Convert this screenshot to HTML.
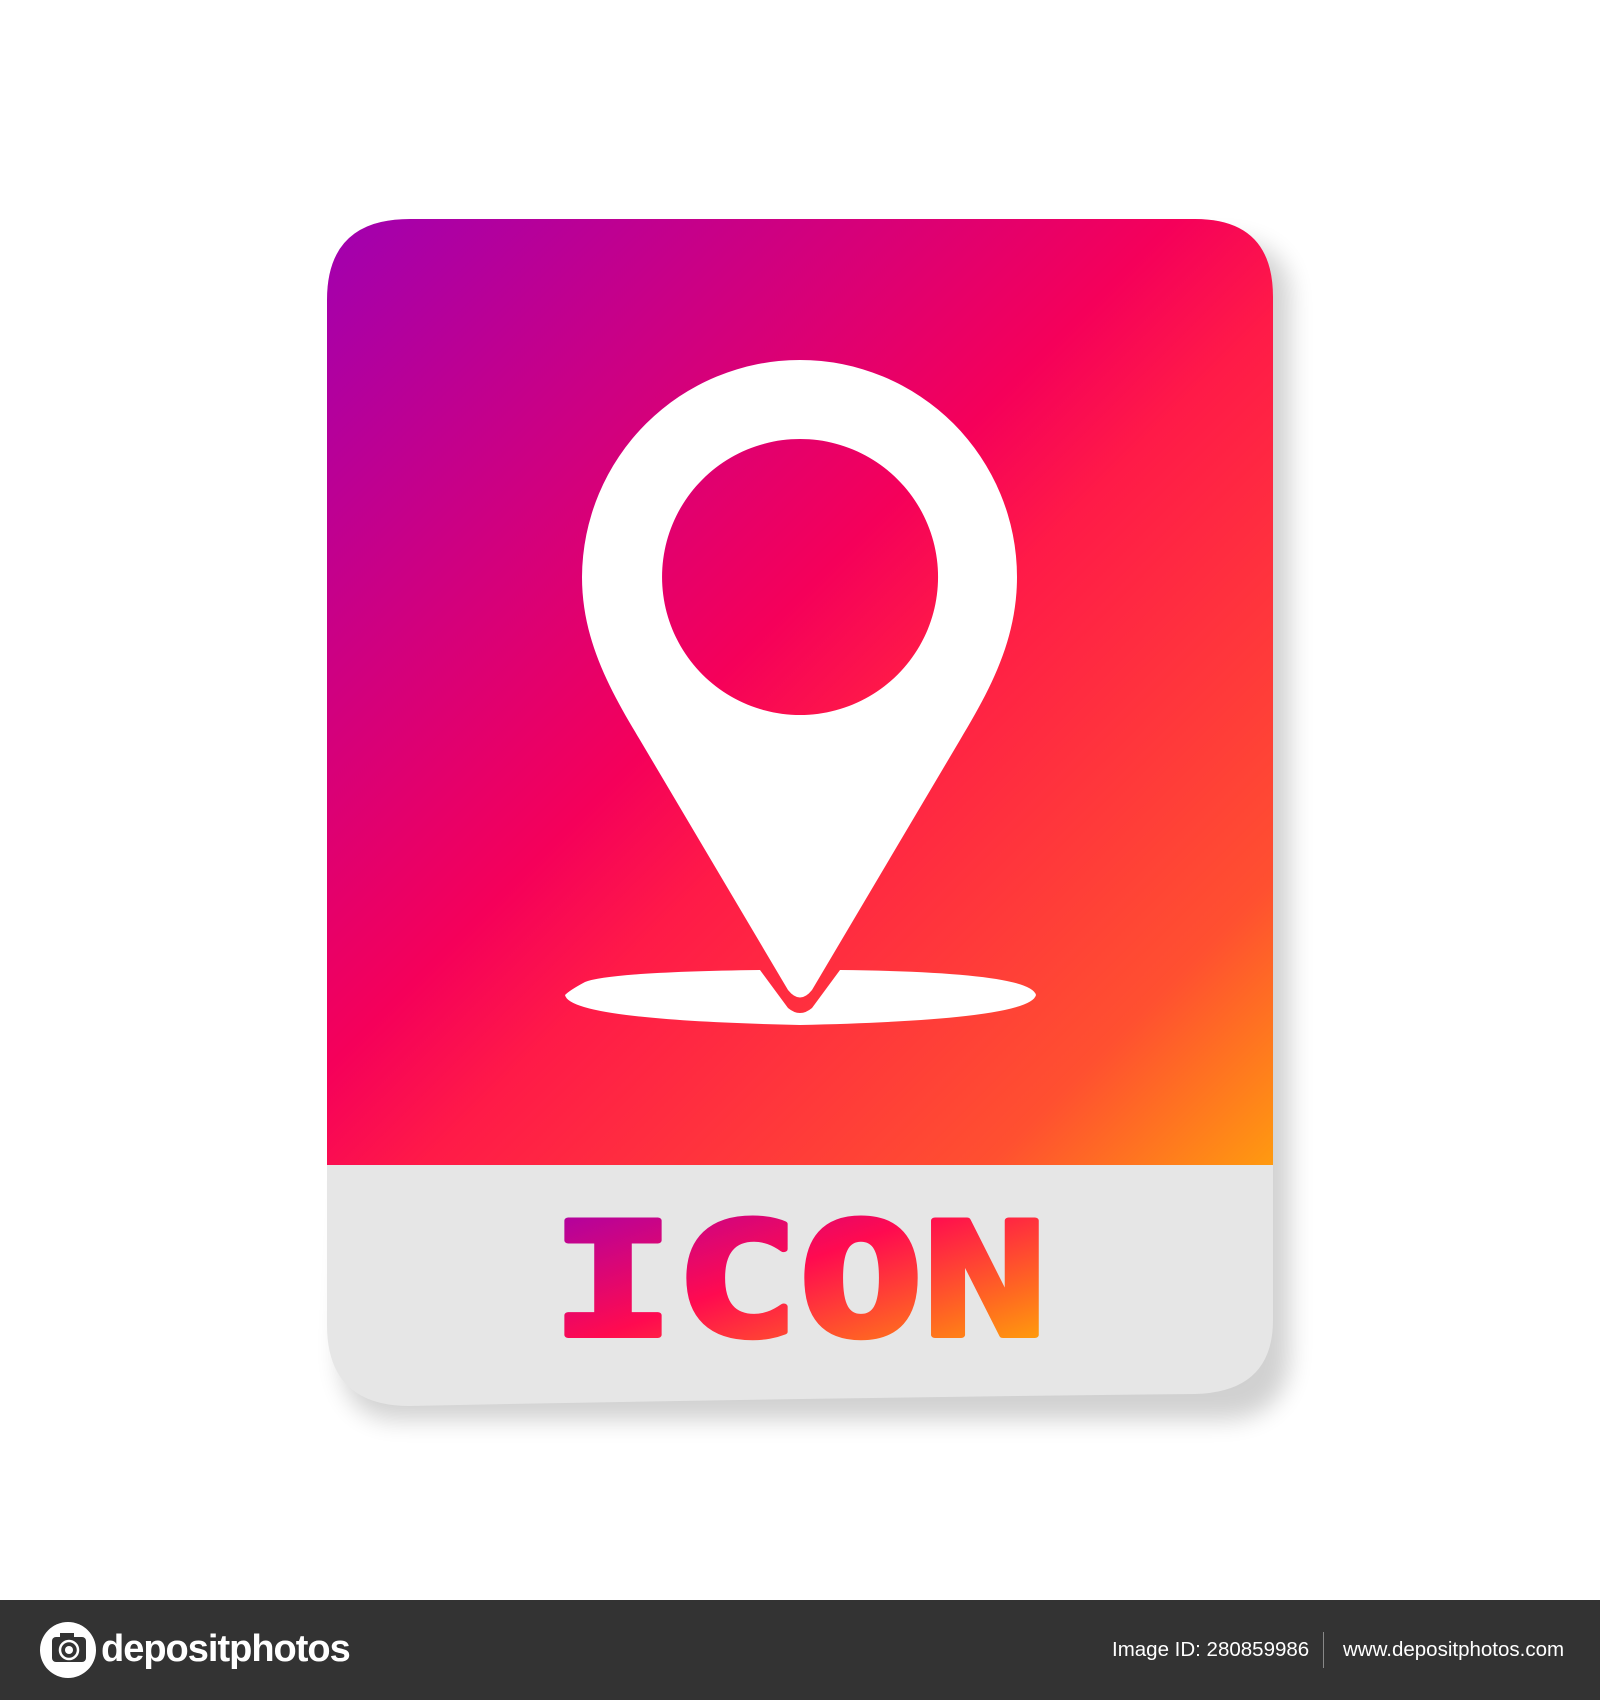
<!DOCTYPE html>
<html><head><style>
body{margin:0;width:1600px;height:1700px;background:#fff;position:relative;overflow:hidden;font-family:"Liberation Sans",sans-serif}
.foot{position:absolute;left:0;top:1600px;width:1600px;height:100px;background:#333}
</style></head><body>
<svg width="1600" height="1600" style="position:absolute;left:0;top:0">
<defs>
<linearGradient id="g" x1="0" y1="0" x2="1" y2="1">
<stop offset="0" stop-color="#a000b0"/><stop offset="0.45" stop-color="#f5005a"/><stop offset="0.55" stop-color="#ff1a48"/><stop offset="0.85" stop-color="#ff5030"/><stop offset="1" stop-color="#ff9a10"/>
</linearGradient>
<linearGradient id="t" x1="0" y1="0" x2="1" y2="1">
<stop offset="0" stop-color="#a000b0"/><stop offset="0.45" stop-color="#ff0a50"/><stop offset="0.75" stop-color="#ff6a20"/><stop offset="1" stop-color="#ffbc00"/>
</linearGradient>
<filter id="s" x="-10%" y="-10%" width="130%" height="130%"><feGaussianBlur stdDeviation="12"/></filter>
<clipPath id="c"><path d="M410 219 H1195 Q1273 219 1273 297 V1320 Q1273 1392 1195 1394 Q800 1398 410 1406 Q327 1406 327 1325 V300 Q327 219 410 219Z"/></clipPath>
</defs>
<path d="M400 240 H1220 Q1290 240 1290 300 V1350 Q1290 1420 1220 1420 H400 Q340 1420 340 1350Z" fill="#000" opacity="0.18" filter="url(#s)"/>
<g clip-path="url(#c)">
<rect x="327" y="219" width="946" height="1190" fill="#e6e6e6"/>
<rect x="327" y="219" width="946" height="946" fill="url(#g)"/>
</g>
<path fill-rule="evenodd" d="M800 360 A217 217 0 0 1 1017 577 C1017 640 990 690 960 740 L812 990 Q800 1005 788 990 L640 740 C610 690 582 640 582 577 A218 218 0 0 1 800 360Z M800 439 A138 138 0 1 0 800.1 439Z" fill="#fff"/>
<path d="M585 982 Q570 990 565 995 Q570 1020 800 1025 Q1030 1020 1036 995 Q1030 972 840 970 L812 1008 Q800 1018 788 1008 L760 970 Q610 972 585 982Z" fill="#fff"/>
<text x="551" y="1335" font-family="DejaVu Sans Mono,monospace" font-weight="bold" font-size="157" textLength="496" lengthAdjust="spacingAndGlyphs" fill="url(#t)" stroke="url(#t)" stroke-width="6" stroke-linejoin="round">ICON</text>
</svg>
<div class="foot">
<svg width="60" height="60" style="position:absolute;left:40px;top:20px"><circle cx="28" cy="30" r="28" fill="#fff"/><rect x="12" y="17" width="34" height="25" rx="4" fill="#333"/><rect x="20" y="13" width="14" height="6" fill="#333"/><circle cx="29" cy="30" r="9" fill="none" stroke="#fff" stroke-width="2.5"/><circle cx="29" cy="30" r="4" fill="#fff"/></svg>
<div style="position:absolute;left:101px;top:28px;color:#fff;font-weight:bold;font-size:38px;letter-spacing:-1px">depositphotos</div>
<div style="position:absolute;left:1112px;top:38px;color:#fff;font-size:20.5px">Image ID: 280859986</div>
<div style="position:absolute;left:1323px;top:32px;width:1px;height:36px;background:#888"></div>
<div style="position:absolute;left:1343px;top:38px;color:#fff;font-size:20.5px">www.depositphotos.com</div>
</div>
</body></html>
